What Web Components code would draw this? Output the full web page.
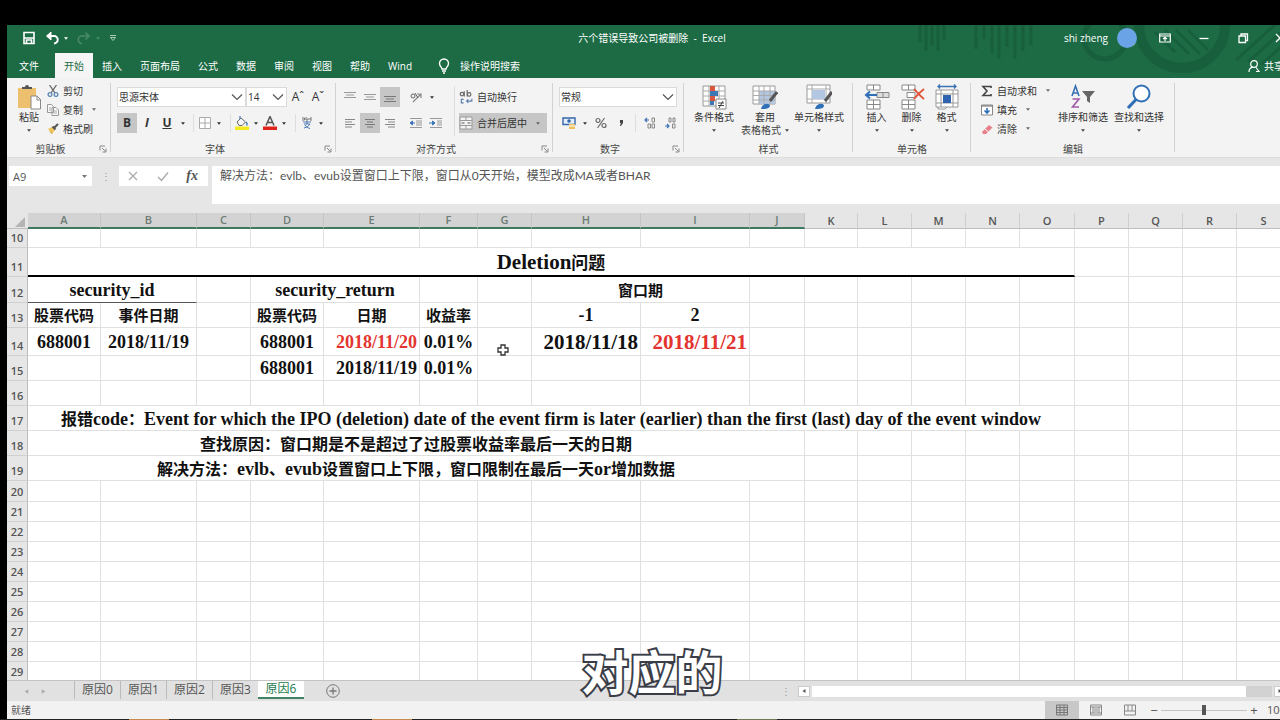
<!DOCTYPE html>
<html lang="zh-CN">
<head>
<meta charset="utf-8">
<title>Excel</title>
<style>
html, body { height: 100%; margin: 0; }
body { background: #000; overflow: hidden; }
</style>
</head>
<body>
<excel-window></excel-window>
<script>
const ICONS = {
  save: ['0 0 14 14', '<path d="M2 1.5h10v11H2z" fill="none" stroke="#fff" stroke-width="1.6"/><path d="M2 7h10M4.500 12v-3h5v3" fill="none" stroke="#fff" stroke-width="1.6"/>'],
  undo: ['0 0 14 14', '<path d="M2 5h7a3.500 3.500 0 0 1 0 7.500" fill="none" stroke="#fff" stroke-width="2"/><path d="M6 1L1.500 5 6 9z" fill="#fff" stroke="#fff"/>'],
  redo: ['0 0 14 14', '<path d="M12 5H5a3.500 3.500 0 0 0 0 7.500" fill="none" stroke="#4b8b69" stroke-width="1.5"/><path d="M8.500 1.500L12 5 8.500 8.500" fill="none" stroke="#4b8b69" stroke-width="1.500"/>'],
  more: ['0 0 8 8', '<path d="M1 1.500h6M1.500 3.500h5L4 6.500z" fill="none" stroke="#a9cbb8"/>'],
  bulb: ['0 0 14 16', '<path d="M5 11C5 9 2.500 8.500 2.500 5.500a4.500 4.500 0 0 1 9 0C11.500 8.500 9 9 9 11zM5 13h4M6 15h2" fill="none" stroke="#fff" stroke-width="1.4"/>'],
  opts: ['0 0 12 12', '<path d="M.7 2h10.600v8H.7zM.7 4h10.600M6 9V5.500M4 7l2-1.800L8 7" fill="none" stroke="#fff" stroke-width="1.2"/>'],
  min: ['0 0 12 12', '<path d="M1.500 6.500h9" stroke="#fff" stroke-width="1.3"/>'],
  restore: ['0 0 12 12', '<path d="M2 4h6.500v6.500H2zM4 4V2h6.500v6.500h-2" fill="none" stroke="#fff" stroke-width="1.3"/>'],
  close: ['0 0 12 12', '<path d="M2 2l8 8M10 2l-8 8" stroke="#fff" stroke-width="1.3"/>'],
  person: ['0 0 12 14', '<circle cx="6" cy="5" r="3.300" fill="none" stroke="#fff" stroke-width="1.2"/><path d="M1 13c0-3 2-4.500 4-4.800M8 8.500l3 4H8" fill="none" stroke="#fff" stroke-width="1.2"/>'],
  caret: ['0 0 5 3', '<path d="M0 0h5L2.500 3z" fill="currentColor"/>'],
  chev: ['0 0 12 8', '<path d="M1 1.500l5 5 5-5" fill="none" stroke="#555" stroke-width="1.2"/>'],
  paste: ['0 0 26 26', '<path d="M2 4h18v20H2z" fill="#ecc06e"/><path d="M6 5V3h3a2 2 0 0 1 4 0h3v2z" fill="#555"/><path d="M15 12h6l3.500 3.500V25H15z" fill="#fff" stroke="#888"/><path d="M21 12v4h4" fill="none" stroke="#888"/>'],
  cut: ['0 0 12 12', '<path d="M2.500 0L8 8M9.500 0L4 8" stroke="#666" stroke-width="1.3"/><circle cx="3" cy="9.500" r="1.900" fill="none" stroke="#5b86b4" stroke-width="1.3"/><circle cx="9" cy="9.500" r="1.900" fill="none" stroke="#5b86b4" stroke-width="1.3"/>'],
  copy: ['0 0 12 12', '<path d="M.5.500h4l2 2v6h-6zM5 3.500h4l2.500 2.500v5.500H5z" fill="#f8f8f8" stroke="#999"/><path d="M6.500 7h3.500M6.500 9h3.500M2 4h2M2 6h2" stroke="#aaa"/>'],
  brush: ['0 0 12 12', '<path d="M1 6l4-2 3 3-3 4z" fill="#efc55e"/><path d="M5.500 3.500l3 3M7 5l4-4" stroke="#555" stroke-width="2"/><path d="M3 8.500l2 2" stroke="#b8862a"/>'],
  dlg: ['0 0 8 8', '<path d="M1 5.500V1h5M3 3l3.500 3.500M7 3.500V7H3.500" fill="none" stroke="#888"/>'],
  al1: ['0 0 12 12', '<path d="M0 1.500h12M2 4h8M0 6.500h12" stroke="#999" stroke-width="1.2"/>'],
  al2: ['0 0 12 12', '<path d="M0 3.500h12M2 6h8M0 8.500h12" stroke="#999" stroke-width="1.2"/>'],
  al3: ['0 0 12 12', '<path d="M0 5.500h12M2 8h8M0 10.500h12" stroke="#777" stroke-width="1.2"/>'],
  hl: ['0 0 12 12', '<path d="M1 2.500h10M1 5h7M1 7.500h10M1 10h7" stroke="#888" stroke-width="1.1"/>'],
  hc: ['0 0 12 12', '<path d="M1 2.500h10M3 5h6M1 7.500h10M3 10h6" stroke="#777" stroke-width="1.1"/>'],
  hr: ['0 0 12 12', '<path d="M1 2.500h10M4 5h7M1 7.500h10M4 10h7" stroke="#888" stroke-width="1.1"/>'],
  orient: ['0 0 14 14', '<path d="M4 12l8-8M12 8V4H8" fill="none" stroke="#888" stroke-width="1.2"/><circle cx="4" cy="6" r="2" fill="none" stroke="#666"/><path d="M6 3l3 5" stroke="#666"/>'],
  in1: ['0 0 14 12', '<path d="M1 1.500h12M7 4h6M7 6h6M7 8h6M1 10.500h12" stroke="#999"/><path d="M6 6H2M3.500 4L1 6l2.500 2z" fill="#3b74b8" stroke="#3b74b8"/>'],
  in2: ['0 0 14 12', '<path d="M1 1.500h12M8 4h5M8 6h5M8 8h5M1 10.500h12" stroke="#999"/><path d="M0 6h4M3.500 4L6 6 3.500 8z" fill="#3b74b8" stroke="#3b74b8"/>'],
  wrap: ['0 0 12 12', '<circle cx="2.500" cy="3.500" r="1.500" fill="none" stroke="#666"/><path d="M4.500 1v4.500M7 0v5.500" stroke="#666"/><circle cx="8.700" cy="3.800" r="1.500" fill="none" stroke="#666"/><path d="M4 8H2v3h2M11 7.500v2H6.500M8 8L6.500 9.500 8 11" fill="none" stroke="#5b7fae"/>'],
  merge: ['0 0 14 14', '<path d="M1 1h12v12H1zM1 4.500h12M1 9.500h12M7 1v3.500M7 9.500V13" fill="#f4f4f4" stroke="#999"/><path d="M2.500 7h3M11.500 7h-3" stroke="#555"/>'],
  border: ['0 0 12 12', '<path d="M.5.500h11v11H.500zM6 .500v11M.500 6h11" fill="#fff" stroke="#aaa"/>'],
  fill: ['0 0 14 14', '<path d="M2 6l4-4 4.500 4L7 9.500H4z" fill="#f5f5f5" stroke="#666"/><path d="M5 3V0M11 6c1.500 1.500 1 3 .500 3.500" stroke="#477fbd" fill="none" stroke-width="1.3"/><path d="M0 10.500h14V14H0z" fill="#f2ea1c"/>'],
  color: ['0 0 14 14', '<path d="M3 9.500L7 .500l4 9M4.500 6.500h5" fill="none" stroke="#555" stroke-width="1.5"/><path d="M0 10.500h14V14H0z" fill="#e0241b"/>'],
  phon: ['0 0 12 12', '<path d="M1 1h2.500v2H1M5 0v3h2V1M11 1H9v2h2" fill="none" stroke="#777"/><path d="M2 5h8M6 4v3M3 7h6M3 11c3-1 5-2 6-4M4 8c1 2 3 3 5 3.500" fill="none" stroke="#4c7cb5"/>'],
  cur: ['0 0 14 14', '<path d="M1 2h12v6.500H1z" fill="#e6eefb" stroke="#3567a8" stroke-width="1.4"/><circle cx="7" cy="5" r="1.800" fill="#3567a8"/><path d="M7 8h6v5H7z" fill="#eec15c"/><path d="M7 10h6" stroke="#fff"/>'],
  pct: ['0 0 12 12', '<circle cx="3" cy="3.500" r="2" fill="none" stroke="#666" stroke-width="1.2"/><circle cx="9" cy="8.500" r="2" fill="none" stroke="#666" stroke-width="1.2"/><path d="M9.500 1l-7 10" stroke="#666" stroke-width="1.2"/>'],
  comma: ['0 0 12 12', '<path d="M5 3h3v3L6 9H5l.800-3H5z" fill="#444"/>'],
  dec1: ['0 0 12 12', '<path d="M5 3H1M3 1L1 3l2 2" fill="none" stroke="#3b74b8" stroke-width="1.2"/><path d="M8 1h2.500v4H8zM4 7h2.500v4H4zM8 7h2.500v4H8z" fill="none" stroke="#888"/>'],
  dec2: ['0 0 12 12', '<path d="M1 9h4M3 7l2 2-2 2" fill="none" stroke="#3b74b8" stroke-width="1.2"/><path d="M5 1h2v4H5zM9 1h2v4H9zM8.500 7H11v4H8.500z" fill="none" stroke="#888"/>'],
  cond: ['0 0 26 26', '<path d="M2 2h22v20H2z" fill="#fff" stroke="#999"/><path d="M2 7h22M2 12h22M2 17h22M8 2v20M18 2v20" stroke="#aaa"/><path d="M9 2h5v5H9zM9 12h5v5H9z" fill="#d9573d"/><path d="M9 7h8v5H9zM9 17h4v4H9z" fill="#3c78b5"/><path d="M15 15h10v10H15z" fill="#fff" stroke="#888"/><path d="M17 19h6M17 21.500h6M22 17l-4 7" stroke="#444"/>'],
  tbl: ['0 0 26 26', '<path d="M1 2h22v18H1z" fill="#fff" stroke="#999"/><path d="M7 7h16v13H7z" fill="#b4c7e2"/><path d="M1 7h22M1 11.500h22M1 16h22M7 2v18M12 2v18M18 2v18" stroke="#aaa"/><path d="M25 8l-7 9" stroke="#555" stroke-width="3"/><path d="M9 25c1-4 5-7 9-4 0 3-2 4-9 4z" fill="#2f6fb7"/>'],
  cell: ['0 0 26 26', '<path d="M1 1h23v18H1z" fill="#fff" stroke="#999"/><path d="M1 5h23M1 15h23M6 1v18M20 1v18" stroke="#aaa"/><path d="M6 6h13v9H6z" fill="#b4c7e2"/><path d="M26 8l-7 9" stroke="#555" stroke-width="3"/><path d="M9 25c1-4 5-7 9-4 0 3-2 4-9 4z" fill="#2f6fb7"/>'],
  ins: ['0 0 26 26', '<path d="M3 1h13v5H3zM9.500 1v5M3 16h13v9H3zM9.500 16v9M3 20.500h13" fill="#fff" stroke="#888"/><path d="M13 8.500h12v5H13zM19 8.500v5" fill="#ddd" stroke="#888"/><path d="M13 11H3M6 7.500L2 11l4 3.500" fill="none" stroke="#2f6fb7" stroke-width="2"/>'],
  del: ['0 0 26 26', '<path d="M3 1h13v5H3zM9.500 1v5M3 16h13v9H3zM9.500 16v9M3 20.500h13M8 8.500h8v5H8z" fill="#fff" stroke="#888"/><path d="M15 5c3 3 6 7 10 10M25 5c-4 3-7 6-10 10" fill="none" stroke="#e0563c" stroke-width="2"/>'],
  fmt: ['0 0 26 26', '<path d="M2 6h22v17H2zM2 10h22M2 19h22M7 6v17M19 6v17M4 23v2h7l2-2" fill="#fff" stroke="#999"/><path d="M9 11h8v8H9z" fill="#2f62b0"/><path d="M4 2.500h18M6 .500L4 2.500l2 2M20 .500l2 2-2 2" fill="none" stroke="#3972b3" stroke-width="1.3"/>'],
  sum: ['0 0 12 12', '<path d="M10 3V1.500H2L6 6l-4 4.500h8V9" fill="none" stroke="#444" stroke-width="1.6"/>'],
  down: ['0 0 12 12', '<path d="M.500 1h11v10H.500z" fill="#fff" stroke="#888"/><path d="M.500 2h11" stroke="#666"/><path d="M6 4v5M3.500 6.500L6 9l2.500-2.500" fill="none" stroke="#2f6fb7" stroke-width="1.6"/>'],
  erase: ['0 0 12 12', '<path d="M1 9l7-7 3.500 2.500L5 11H2z" fill="#e8808c"/><path d="M4 6l3.500 3" stroke="#fff"/>'],
  sort: ['0 0 26 26', '<path d="M2 12L5.500 2 9 12M3 9h5" fill="none" stroke="#3972b3" stroke-width="1.6"/><path d="M2.500 15h6.500l-6.500 8H9" fill="none" stroke="#a05aa8" stroke-width="1.6"/><path d="M12 7h13l-5 6v6l-3-2v-4z" fill="#666"/>'],
  find: ['0 0 26 26', '<circle cx="15.500" cy="9.500" r="8" fill="#fff" stroke="#2f6fb7" stroke-width="2"/><path d="M10 15.500L2 24" stroke="#2f6fb7" stroke-width="3.200"/>'],
  tri: ['0 0 10 10', '<path d="M10 0v10H0z" fill="#b4b4b4"/>'],
  x: ['0 0 12 12', '<path d="M2 2l8 8M10 2l-8 8" stroke="#aaa" stroke-width="1.2"/>'],
  tick: ['0 0 12 12', '<path d="M1 7l3.500 3.500L11 2.500" fill="none" stroke="#aaa" stroke-width="1.4"/>'],
  plus: ['0 0 14 14', '<circle cx="7" cy="7" r="6.300" fill="none" stroke="#777"/><path d="M7 3.500v7M3.500 7h7" stroke="#777" stroke-width="1.3"/>'],
  left: ['0 0 6 6', '<path d="M4.500 1v4L1.500 3z" fill="currentColor"/>'],
  right: ['0 0 6 6', '<path d="M1.500 1v4l3-2z" fill="currentColor"/>'],
  v1: ['0 0 12 12', '<path d="M.500 1h11v10H.500zM.500 3.500h11M.500 6h11M.500 8.500h11M4 1v10M8 1v10" fill="none" stroke="#777"/>'],
  v2: ['0 0 12 12', '<path d="M.500 1h11v10H.500zM3 3h6v6H3zM4 5h4M4 7h4M.500 3H3M.500 9H3M9 3h2.500M9 9h2.500" fill="none" stroke="#888"/>'],
  v3: ['0 0 12 12', '<path d="M.500 1h11v10H.500zM4 1v6M4 7H.500M8 1v6h3.500M4 7h4" fill="none" stroke="#888"/>'],
  cursor: ['0 0 14 14', '<path d="M5 2h4v3h3v4H9v3H5V9H2V5h3z" fill="#fff" stroke="#333" stroke-width="1.3"/>']
};
const ic = (name, w, h = w) => `<svg class="ic" aria-hidden="true" width="${w}" height="${h}" viewBox="${ICONS[name][0]}">${ICONS[name][1]}</svg>`;
const BASE = `:host{box-sizing:border-box;display:block}*{box-sizing:border-box}button{font:inherit;color:inherit;background:none;border:0;padding:0;margin:0;white-space:nowrap}svg{display:block;flex:none}`;
function define(tag, css, html) {
  customElements.define(tag, class extends HTMLElement {
    connectedCallback() {
      if (this.shadowRoot) return;
      const root = this.attachShadow({ mode: 'open' });
      root.innerHTML = `<style>${BASE}${css}</style>${typeof html === 'function' ? html(this) : html}`;
    }
  });
}

/* Title row and ribbon tabs, with the window art behind them */
define('app-header', `
:host{position:relative;background:#1c6b45;color:#fff;overflow:hidden}
.art{position:absolute;right:17px;top:0}
.title{position:relative;display:grid;grid-template-columns:1fr auto 1fr;align-items:center;height:26px}
.quick{display:flex;align-items:center;gap:9px;padding-left:15px}
.quick button{display:flex;align-items:center;gap:5px}
.win{display:flex;justify-content:flex-end;align-items:center;min-width:0}
.avatar{width:20px;height:20px;border-radius:50%;margin:0 8px 0 9px;background:linear-gradient(135deg,#6aa3e6 84%,#fff 84%)}
.win button{width:39px;display:flex;justify-content:center}
.win button:last-child{width:35px}
nav{position:relative;display:flex;align-items:flex-end;height:27px}
nav button{height:25px;padding:0 9px}
.file{margin:0 7px 0 3px}
.on{background:#f5f5f5;color:#1c6b45}
.tell{display:flex;align-items:center;gap:9px;padding:0 16px}
.share{margin-left:auto;display:flex;align-items:center;gap:4px;padding:0 13px}
`, `
<svg class="art" aria-hidden="true" width="370" height="53" viewBox="910 25 370 53">
<path d="M920 25v17M926 25v26M932 25v20M938 25v26M944 25v15M976 25v24M984 25v14M992 25v28M999 25v34M1007 25v22M1015 25v34M1023 25v26M1031 25v20" stroke="#185f3d" stroke-width="3"/>
<g fill="none" stroke="#185f3d"><circle cx="1105" cy="38" r="21" stroke-width="5"/><circle cx="1182" cy="25" r="43" stroke-width="10"/><path d="M1155 32l20 20M1165 30l24 24M1176 30l24 24M1188 30l20 20M1236 60l40-36M1248 62l40-36M1262 64l24-22" stroke-width="3"/></g></svg>
<div class="title"><div class="quick"><button aria-label="保存">${ic('save', 14)}</button><button aria-label="撤消">${ic('undo', 14)}${ic('caret', 4, 3)}</button><button aria-label="恢复" style="color:#4b8b69">${ic('redo', 14)}${ic('caret', 4, 3)}</button><button aria-label="自定义">${ic('more', 8)}</button></div>
<span>六个错误导致公司被删除 &nbsp;-&nbsp; Excel</span>
<div class="win"><span>shi zheng</span><i class="avatar"></i><button aria-label="功能区选项">${ic('opts', 12)}</button><button aria-label="最小化">${ic('min', 12)}</button><button aria-label="还原">${ic('restore', 12)}</button><button aria-label="关闭">${ic('close', 12)}</button></div></div>
<nav><button class="file">文件</button><button class="on">开始</button><button>插入</button><button>页面布局</button><button>公式</button><button>数据</button><button>审阅</button><button>视图</button><button>帮助</button><button>Wind</button><button class="tell">${ic('bulb', 14, 16)}操作说明搜索</button><button class="share">${ic('person', 12, 14)}共享</button></nav>`);

/* Tool button: icon, text and caret in a row */
define('tool-button', `
:host{display:inline-block;height:20px}
:host([w="12"]){width:12px}:host([w="14"]){width:14px}:host([w="20"]){width:20px}
button{display:flex;width:100%;height:100%;align-items:center;justify-content:center;gap:4px}
:host([text]) button{justify-content:flex-start}
:host([on]) button{background:#c6c6c6}
.car{color:#666;margin-left:5px}
::slotted(*){font-size:12px}
`, el => {
  const t = el.getAttribute('text') || '', i = el.getAttribute('icon');
  return `<button aria-label="${t || el.getAttribute('label') || ''}">${i ? ic(i, i === 'caret' ? 4 : +(el.getAttribute('s') || 12), i === 'caret' ? 3 : undefined) : ''}${t ? `<span>${t}</span>` : '<slot></slot>'}${el.hasAttribute('caret') ? `<span class="car">${ic('caret', 4, 3)}</span>` : ''}</button>`;
});

/* Large button: icon above one or two lines of text */
define('big-button', `
:host{flex:none}
button{display:flex;flex-direction:column;align-items:center;padding-top:3px;width:100%;line-height:13px}
.t{margin-top:1px}
.c{height:13px;display:flex;align-items:center;gap:4px;color:#444}
`, el => `<button>${ic(el.getAttribute('icon'), 26)}<span class="t">${el.getAttribute('text')}</span><span class="c">${el.getAttribute('second') || ''}${ic('caret', 4, 3)}</span></button>`);

/* Group of the ribbon with its caption */
define('ribbon-group', `
:host{display:flex;flex-direction:column;flex:none;height:79px;padding-top:3px;position:relative}
:host::after{content:"";position:absolute;right:0;top:5px;bottom:5px;width:1px;background:#d2d2d2}
.body{flex:1;display:flex}
.cap{position:relative;display:flex;align-items:center;justify-content:center;height:16px;color:#444}
:host([dialog]) .cap{padding-right:17px}
.cap button{position:absolute;right:4px;top:4px}
`, el => `<div class="body"><slot></slot></div><div class="cap">${el.getAttribute('caption')}${el.hasAttribute('dialog') ? `<button aria-label="更多">${ic('dlg', 8)}</button>` : ''}</div>`);

define('drop-box', `
:host{position:relative;height:20px}
select{appearance:none;width:100%;height:100%;border:1px solid #dadada;border-radius:0;background:#fff;color:#333;font:inherit;padding:0 1px}
svg{position:absolute;right:3px;top:6px;pointer-events:none}
`, el => `<select aria-label="${el.getAttribute('label')}"><option>${el.getAttribute('value')}</option></select>${ic('chev', 12, 8)}`);

define('ribbon-bar', `
:host{display:flex;background:#f3f3f3;color:#333;overflow:hidden}
.clip{width:104px}.font{width:225px}.align{width:217px}.num{width:131px}.style{width:169px}.cells{width:118px}.edit{width:204px}
.rows{display:flex;flex-direction:column;gap:6px;padding-top:6px}
.row{display:flex;height:20px;align-items:center}
.list{display:flex;flex-direction:column}
.list tool-button{height:19px}
.sep{width:1px;height:18px;background:#dedede;margin:0 4px}
.tall{height:50px;margin:5px 4px 0 8px}
.font .rows,.num .rows{padding-left:6px}.align .rows{padding-left:4px}.align .tall+.rows{padding-left:0}
.name{width:129px}.size{width:41px;margin:0 1px 0 0}.fmt{width:118px}
.clip big-button{width:30px;margin:0 3px 0 7px}
.style big-button{width:54px}.style big-button:first-child{width:48px;margin-left:6px}
.cells big-button{width:35px}.cells big-button:first-child{margin-left:6px}
.edit .list{padding-left:10px;width:84px}.edit big-button{width:56px}
.wrap{width:88px}
.g{margin-left:6px}
`, `
<ribbon-group class="clip" caption="剪贴板" dialog><big-button icon="paste" text="粘贴"></big-button><div class="list"><tool-button icon="cut" text="剪切"></tool-button><tool-button icon="copy" text="复制" caret></tool-button><tool-button icon="brush" text="格式刷"></tool-button></div></ribbon-group>
<ribbon-group class="font" caption="字体" dialog><div class="rows">
<div class="row"><drop-box class="name" label="字体" value="思源宋体"></drop-box><drop-box class="size" label="字号" value="14"></drop-box><tool-button w="20" label="增大字号"><span>Aˆ</span></tool-button><tool-button w="20" label="减小字号"><span>Aˇ</span></tool-button></div>
<div class="row"><tool-button w="20" on label="加粗"><b>B</b></tool-button><tool-button w="20" label="倾斜"><b><i>I</i></b></tool-button><tool-button w="20" label="下划线"><b><u>U</u></b></tool-button><tool-button w="12" icon="caret" label="更多"></tool-button><i class="sep"></i><tool-button w="14" icon="border" label="边框"></tool-button><tool-button w="14" icon="caret" label="更多"></tool-button><i class="sep"></i><tool-button w="14" s="14" icon="fill" label="填充颜色"></tool-button><tool-button w="14" icon="caret" label="更多"></tool-button><tool-button w="14" s="14" icon="color" label="字体颜色"></tool-button><tool-button w="14" icon="caret" label="更多"></tool-button><i class="sep"></i><tool-button w="14" icon="phon" label="拼音"></tool-button><tool-button w="14" icon="caret" label="更多"></tool-button></div></div></ribbon-group>
<ribbon-group class="align" caption="对齐方式" dialog><div class="rows">
<div class="row"><tool-button w="20" icon="al1" label="顶端对齐"></tool-button><tool-button w="20" icon="al2" label="垂直居中"></tool-button><tool-button w="20" on icon="al3" label="底端对齐"></tool-button><tool-button class="g" w="20" s="14" icon="orient" label="方向"></tool-button><tool-button w="12" icon="caret" label="更多"></tool-button></div>
<div class="row"><tool-button w="20" icon="hl" label="左对齐"></tool-button><tool-button w="20" on icon="hc" label="居中"></tool-button><tool-button w="20" icon="hr" label="右对齐"></tool-button><tool-button class="g" w="20" s="14" icon="in1" label="减少缩进"></tool-button><tool-button w="20" s="14" icon="in2" label="增加缩进"></tool-button></div></div>
<i class="sep tall"></i>
<div class="rows"><tool-button icon="wrap" s="14" text="自动换行"></tool-button><tool-button class="wrap" on icon="merge" s="14" text="合并后居中" caret></tool-button></div></ribbon-group>
<ribbon-group class="num" caption="数字" dialog><div class="rows"><div class="row"><drop-box class="fmt" label="数字格式" value="常规"></drop-box></div><div class="row"><tool-button w="20" s="14" icon="cur" label="货币"></tool-button><tool-button w="12" icon="caret" label="更多"></tool-button><tool-button w="20" icon="pct" label="百分比"></tool-button><tool-button w="20" icon="comma" label="千位分隔"></tool-button><i class="sep"></i><tool-button w="20" icon="dec1" label="增加小数位"></tool-button><tool-button w="20" icon="dec2" label="减少小数位"></tool-button></div></div></ribbon-group>
<ribbon-group class="style" caption="样式"><big-button icon="cond" text="条件格式"></big-button><big-button icon="tbl" text="套用" second="表格格式"></big-button><big-button icon="cell" text="单元格样式"></big-button></ribbon-group>
<ribbon-group class="cells" caption="单元格"><big-button icon="ins" text="插入"></big-button><big-button icon="del" text="删除"></big-button><big-button icon="fmt" text="格式"></big-button></ribbon-group>
<ribbon-group class="edit" caption="编辑"><div class="list"><tool-button icon="sum" text="自动求和" caret></tool-button><tool-button icon="down" text="填充" caret></tool-button><tool-button icon="erase" text="清除" caret></tool-button></div><big-button icon="sort" text="排序和筛选"></big-button><big-button icon="find" text="查找和选择"></big-button></ribbon-group>`);

define('formula-bar', `
:host{display:flex;align-items:flex-start;background:#e6e6e6;padding:8px 0 9px 2px;color:#555;border-top:1px solid #dcdcdc}
.name{position:relative;width:83px;height:20px}
input,textarea{border:0;margin:0;background:#fff;color:#555;font:inherit;outline:0;display:block}
input{width:100%;height:100%;padding:0 4px;font-size:11px}
.name svg{position:absolute;right:5px;top:9px;color:#777}
.dots{width:27px;text-align:center;line-height:20px;color:#999}
.fx{display:flex;align-items:center;justify-content:space-between;width:89px;height:20px;padding:0 10px 0 8px;background:#fff;margin-right:4px}
.fx i{font:italic 700 14px "Liberation Serif",serif}
textarea{flex:1;height:38px;padding:1px 8px;font-family:Lato,"Noto Sans CJK SC",sans-serif;font-size:12px;line-height:18px;resize:none;overflow:hidden}
`, `<div class="name"><input aria-label="名称框" value="A9">${ic('caret', 5, 3)}</div><span class="dots">⋮</span><div class="fx"><button aria-label="取消">${ic('x', 12)}</button><button aria-label="输入">${ic('tick', 12)}</button><button aria-label="插入函数"><i>fx</i></button></div><textarea aria-label="编辑栏">解决方法：evlb、evub设置窗口上下限，窗口从0天开始，模型改成MA或者BHAR</textarea>`);

/* Worksheet: columns A to S, rows 10 to 29 */
const COLS = [73, 96, 54, 73, 96, 58, 54, 109, 109, 55, 53, 54, 54, 54, 55, 54, 54, 54, 54];
const ROWS = { 10: 19, 11: 29, 12: 26, 13: 25, 14: 28, 15: 25, 16: 25, 17: 25, 18: 25, 19: 25, 20: 21 };
const CELLS = {
  11: { 0: ['Deletion问题', 15, 'big rule'] },
  12: { 0: ['security_id', 2, 'thin'], 3: ['security_return', 2], 7: ['窗口期', 2] },
  13: { 0: ['股票代码'], 1: ['事件日期'], 3: ['股票代码'], 4: ['日期'], 5: ['收益率'], 7: ['-1'], 8: ['2'] },
  14: { 0: ['688001'], 1: ['2018/11/19'], 3: ['688001'], 4: ['2018/11/20', 1, 'red r'], 5: ['0.01%'], 7: ['2018/11/18', 1, 'big r'], 8: ['2018/11/21', 1, 'big red r'] },
  15: { 3: ['688001'], 4: ['2018/11/19', 1, 'r'], 5: ['0.01%'] },
  17: { 0: ['报错code：Event for which the IPO (deletion) date of the event firm is later (earlier) than the first (last) day of the event window', 15] },
  18: { 0: ['查找原因：窗口期是不是超过了过股票收益率最后一天的日期', 10] },
  19: { 0: ['解决方法：evlb、evub设置窗口上下限，窗口限制在最后一天or增加数据', 10] }
};
const latin = s => s.replace(/[\x20-\x7e]+/g, m => `<span>${m}</span>`);
define('sheet-grid', `
:host{flex:1;min-height:0;overflow:hidden;background:#fff;position:relative}
table{border-collapse:separate;border-spacing:0;table-layout:fixed;width:${21 + COLS.reduce((a, b) => a + b)}px}
th,td{padding:0;overflow:hidden;white-space:nowrap;text-align:center;vertical-align:middle}
th{font:600 11px/14px "Open Sans",sans-serif;color:#555;background:#e6e6e6}
thead th{height:16px;border-right:1px solid #cfcfcf;border-bottom:1px solid #bdbdbd;line-height:14px}
thead th.sel{background:#d3d3d3;color:#6c7b74;border-right-color:#c4c4c4;border-bottom:2px solid #3f7a60}
thead th:first-child{border-right:0}
thead svg{margin:3px 0 0 8px}
tbody th{border-right:1px solid #bdbdbd;border-bottom:1px solid #d0d0d0;vertical-align:bottom;line-height:18px}
td{border-right:1px solid #e0e0e0;border-bottom:1px solid #e0e0e0;color:#111;font:700 15px/18px "Noto Sans CJK SC",sans-serif}
td span{font-family:"Liberation Serif",serif;font-size:18px;line-height:18px}
td[colspan="10"],td[colspan="15"]{font-size:16px}
td.big,td.rule{font-size:17px}td.big span{font-size:21px}
td.rule{border-bottom:2px solid #000}
td.thin{border-bottom:1px solid #555}
td.red{color:#e3342f}td.r{text-align:right;padding-right:2px}
.cursor{position:absolute;left:489px;top:130px}
`, () => {
  const head = COLS.map((_, i) => `<th scope="col"${i < 10 ? ' class="sel"' : ''}>${String.fromCharCode(65 + i)}</th>`).join('');
  let body = '';
  for (let r = 10; r < 30; r++) {
    body += `<tr style="height:${ROWS[r] || 20}px"><th scope="row">${r}</th>`;
    for (let c = 0; c < COLS.length;) {
      const [text, span = 1, cls = ''] = (CELLS[r] || {})[c] || [''];
      body += `<td${span > 1 ? ` colspan="${span}"` : ''}${cls ? ` class="${cls}"` : ''}>${latin(text)}</td>`;
      c += span;
    }
    body += '</tr>';
  }
  return `<table><colgroup><col style="width:21px">${COLS.map(w => `<col style="width:${w}px">`).join('')}</colgroup><thead><tr><th>${ic('tri', 10)}</th>${head}</tr></thead><tbody>${body}</tbody></table><div class="cursor">${ic('cursor', 14)}</div>`;
});

define('sheet-tabs', `
:host{display:flex;align-items:center;height:21px;background:#e1e1e1;border-top:1px solid #c4c4c4;color:#555}
.nav{display:flex;justify-content:space-between;width:67px;padding:0 27px 0 16px;color:#aaa}
.tabs{display:flex;align-self:flex-start}
.tabs button{width:46px;height:18px;font-size:12px;line-height:16px;border-left:1px solid #bbb}
.tabs .on{background:#fff;color:#1c7a4d;border-left:0;border-bottom:2px solid #3f8464}
.add{margin-left:22px}
.scroll{margin-left:auto;display:flex;align-items:center;width:505px;height:11px;margin-right:11px}
.scroll button{width:12px;height:11px;background:#fff;display:grid;place-items:center;border:1px solid #ccc}
.dots{color:#999;width:10px;line-height:11px}
.gap{width:7px}
.track{flex:1;height:11px;background:#d2d2d2;margin:0 2px;padding-right:26px}
.track i{display:block;height:100%;background:#fff}
`, `<div class="nav"><button aria-label="上一张">${ic('left', 7)}</button><button aria-label="下一张">${ic('right', 7)}</button></div><div class="tabs"><button>原因0</button><button>原因1</button><button>原因2</button><button>原因3</button><button class="on">原因6</button></div><button class="add" aria-label="新工作表">${ic('plus', 14)}</button><div class="scroll"><span class="dots">⋮</span><i class="gap"></i><button aria-label="向左">${ic('left', 6)}</button><div class="track"><i></i></div><button aria-label="向右">${ic('right', 6)}</button></div>`);

define('status-bar', `
:host{display:flex;align-items:center;height:18px;background:#f2f2f2;color:#555;padding-left:4px;overflow:hidden}
.views{display:flex;margin-left:auto}
.views button{width:34px;height:18px;display:grid;place-items:center}
.views .on{background:#c8c8c8}
.zoom{display:flex;align-items:center;width:150px;flex:none;font-size:11px}
.zoom button{width:14px;font-size:13px;line-height:14px}
input{appearance:none;width:86px;height:14px;margin:0;background:linear-gradient(#c4c4c4,#c4c4c4) center/100% 1px no-repeat}
input::-webkit-slider-thumb{appearance:none;width:4px;height:10px;background:#555}
.zoom span{margin-left:6px}
`, `<span>就绪</span><div class="views"><button class="on" aria-label="普通">${ic('v1', 12)}</button><button aria-label="页面布局">${ic('v2', 12)}</button><button aria-label="分页预览">${ic('v3', 12)}</button></div><div class="zoom"><button aria-label="缩小">−</button><input type="range" aria-label="显示比例" value="50"><button aria-label="放大">+</button><span>100%</span></div>`);

define('video-caption', `
:host{position:absolute;left:7px;right:0;bottom:20px;text-align:center;pointer-events:none;font:700 47px/60px "Noto Sans CJK SC",sans-serif;color:#fff;-webkit-text-stroke:4px #3a3d47;paint-order:stroke fill}
`, '<slot></slot>');

define('excel-window', `
:host{display:flex;flex-direction:column;position:relative;height:100vh;width:calc(100% + 17px);padding:25px 0 1px 7px;background:#000;overflow:hidden;font:10px/14px "Open Sans","Noto Sans CJK SC",sans-serif}
.desk{position:absolute;left:0;right:0;bottom:0;height:1px;background:linear-gradient(90deg,#222 129px,#c98b4c 129px 169px,#222 169px 372px,#c98b4c 372px 412px,#222 412px 737px,#6d7a55 737px 777px,#222 777px)}
app-header,ribbon-bar,formula-bar,sheet-tabs,status-bar{flex:none}
`, `<app-header></app-header><ribbon-bar></ribbon-bar><formula-bar></formula-bar><sheet-grid></sheet-grid><sheet-tabs></sheet-tabs><status-bar></status-bar><div class="desk"></div><video-caption>对应的</video-caption>`);
</script>
</body>
</html>
